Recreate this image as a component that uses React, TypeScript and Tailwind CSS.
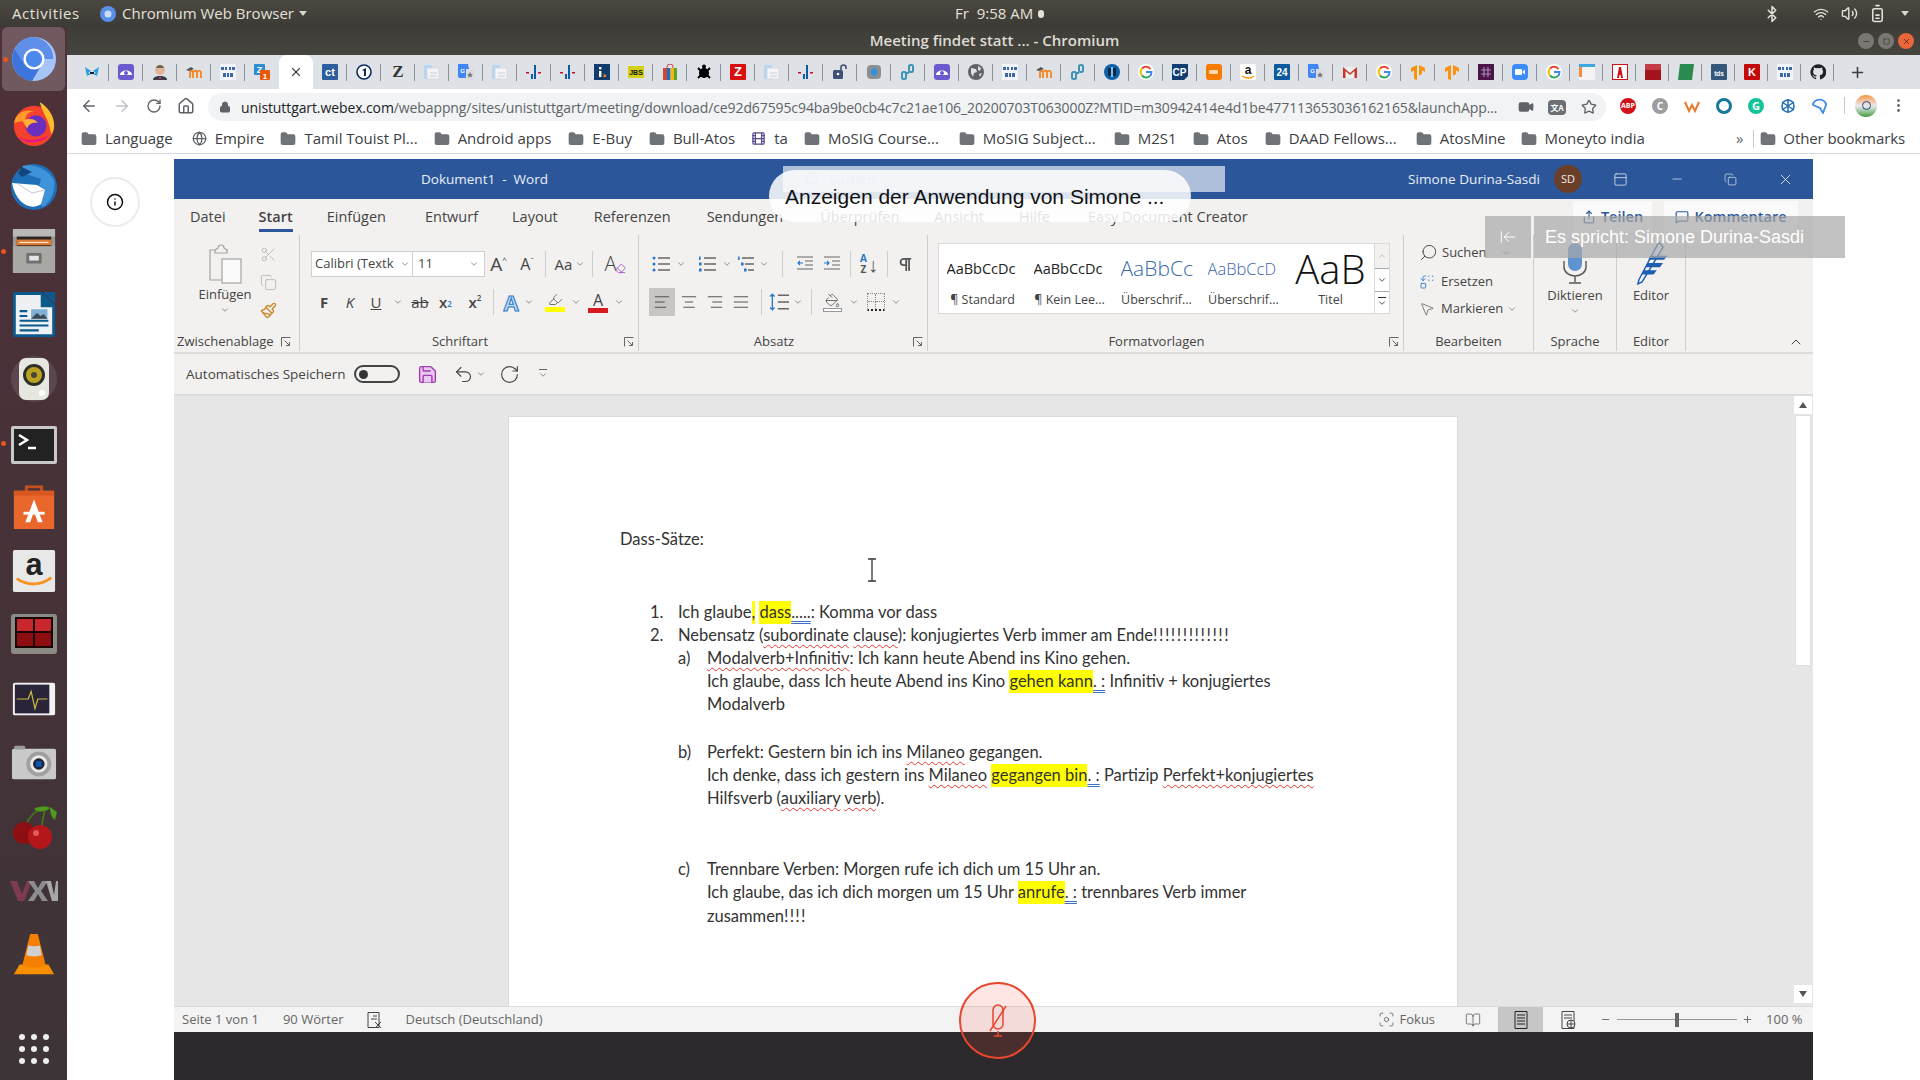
import type { ReactNode } from 'react'
import {
  ArrowLeft, ArrowRight, RotateCw, Home, Lock, Video, Star, MoreVertical, Folder, Globe, Film, Plus, X, Minus, Info,
  Scissors, Copy, Paintbrush, ChevronDown, ChevronUp, AlignLeft, AlignCenter, AlignRight, AlignJustify, Pilcrow,
  Search, MousePointer2, Share, MessageSquare, Undo2, RotateCw as Redo, Save, Bluetooth, Wifi, Volume2, BatteryMedium,
  ArrowLeftToLine, Eraser, Replace, Square, PanelTop, BookOpen, Focus, Highlighter, PaintBucket,
} from 'lucide-react'

function Favicon({ kind }: { kind: string }) {
  const box = (bg: string, label: string, fg = '#fff', size = 8) => (
    <svg viewBox="0 0 16 16" className="w-4 h-4">
      <rect width="16" height="16" rx="1" fill={bg} />
      <text x="8" y="11.5" textAnchor="middle" fontSize={size} fontWeight="700" fill={fg} fontFamily="Liberation Sans">{label}</text>
    </svg>
  )
  switch (kind) {
    case 'fly':
      return <svg viewBox="0 0 16 16" className="w-4 h-4"><path d="M1 3l6 4-3 2 3 1-4 2zM15 3L9 7l3 2-3 1 4 2z" fill="#2d9fd8" /><path d="M6 8h4v2H6z" fill="#123" /></svg>
    case 'cloud':
      return <svg viewBox="0 0 16 16" className="w-4 h-4"><rect width="16" height="16" rx="3" fill="#6a5acd" /><path d="M2 11c0-6 12-6 12 0z" fill="#fff" /><circle cx="8" cy="9" r="2" fill="#6a5acd" /></svg>
    case 'jenkins':
      return <svg viewBox="0 0 16 16" className="w-4 h-4"><path d="M1 16c0-3 3-4 7-4s7 1 7 4z" fill="#39394a" /><circle cx="8" cy="6" r="5" fill="#e0b29a" /><path d="M4 4c1-4 7-4 8 0z" fill="#77604f" /><path d="M7 13h2v2H7z" fill="#c33" /></svg>
    case 'moodle':
      return <svg viewBox="0 0 16 16" className="w-4 h-4"><path d="M4 14V8c2-2 3-1 3 1v5M7 14V8c2-2 4-2 4 1v5M11 14V9c0-3 4-3 4 0v5" stroke="#f98012" strokeWidth="1.7" fill="none" /><path d="M0 6l5-3 3 2-5 2z" fill="#555" /></svg>
    case 'tamil':
      return <svg viewBox="0 0 16 16" className="w-4 h-4"><rect width="16" height="16" fill="#f1f4fa" /><path d="M1 3h3v3H1zM5 3h2v3H5zM9 3h2v3H9zM12 3h3v3h-3zM3 9h3v4H3zM7 9h2v4H7zM10 9h3v4h-3z" fill="#3e67a8" /></svg>
    case 'z1':
      return <svg viewBox="0 0 16 16" className="w-4 h-4"><rect width="11" height="11" rx="1" fill="#2d8ccd" /><text x="5.5" y="9" textAnchor="middle" fontSize="9" fontWeight="700" fill="#fff" fontFamily="Liberation Sans">Z</text><rect x="6" y="6" width="10" height="10" rx="1" fill="#e8590c" /><text x="11" y="14.5" textAnchor="middle" fontSize="8" fontWeight="700" fill="#fff" fontFamily="Liberation Sans">1</text></svg>
    case 'ct':
      return box('#2d5f9e', 'ct', '#fff', 11)
    case 'ard':
      return <svg viewBox="0 0 16 16" className="w-4 h-4"><circle cx="8" cy="8" r="7" fill="#fff" stroke="#0c2a5e" strokeWidth="1.6" /><path d="M6 6l4-2v8H8V7z" fill="#0c2a5e" /></svg>
    case 'zeit':
      return <span className="font-['Liberation_Serif',serif] font-bold text-[17px] leading-4 text-[#333]">Z</span>
    case 'doc':
      return <svg viewBox="0 0 16 16" className="w-4 h-4"><rect x="0" y="1" width="8" height="14" fill="#b9d6ee" /><rect x="3" y="4" width="12" height="11" fill="#f3f4f6" stroke="#c9ced6" strokeWidth=".6" /><path d="M6 9h7M6 12h7" stroke="#c9ced6" /></svg>
    case 'tr':
      return <svg viewBox="0 0 16 16" className="w-4 h-4"><path d="M0 0h10l3 14H2a2 2 0 01-2-2z" fill="#4285f4" /><path d="M8 5h8v11H8z" fill="#dadce0" /><text x="4.5" y="8.5" textAnchor="middle" fontSize="6" fontWeight="700" fill="#fff" fontFamily="Liberation Sans">G</text><path d="M12 8l1 2 2 .4-1.5 1.2.5 2-2-1-2 1 .5-2L9 10.4l2-.4z" fill="#777" /></svg>
    case 'bars':
      return <svg viewBox="0 0 16 16" className="w-4 h-4"><path d="M5 10h2v5H5zM8 1h2v14H8z" fill="#0d5aa7" /><path d="M0 8h3v1.5H0zM12 8h3v1.5h-3z" fill="#c2112e" /></svg>
    case 'info':
      return <svg viewBox="0 0 16 16" className="w-4 h-4"><rect width="16" height="16" fill="#123c6b" /><rect x="5" y="3" width="2.4" height="2.4" fill="#fff" /><rect x="5" y="7" width="2.4" height="6" fill="#fff" /><rect x="9.5" y="10.5" width="2.6" height="2.6" fill="#f47b20" /></svg>
    case 'jbs':
      return <svg viewBox="0 0 16 16" className="w-4 h-4"><rect y="2" width="16" height="12" fill="#d4cf17" /><text x="8" y="11" textAnchor="middle" fontSize="7" fontWeight="700" fill="#111" fontFamily="Liberation Sans">JBS</text></svg>
    case 'bag':
      return <svg viewBox="0 0 16 16" className="w-4 h-4"><path d="M5 5V3a3 3 0 016 0v2" fill="none" stroke="#c44" /><path d="M1 4h4v12H1z" fill="#d5452f" /><path d="M5 4h3.5v12H5z" fill="#1a6fd1" /><path d="M8.5 4H12v12H8.5z" fill="#f2b70c" /><path d="M12 4h3v12h-3z" fill="#5aa532" /></svg>
    case 'turtle':
      return <svg viewBox="0 0 16 16" className="w-4 h-4"><circle cx="8" cy="9" r="5" fill="#000" /><circle cx="8" cy="2.5" r="2" fill="#000" /><path d="M2 4l3 3M14 4l-3 3M2 14l3-3M14 14l-3-3" stroke="#000" strokeWidth="2" /></svg>
    case 'zred':
      return box('#d8110f', 'Z', '#fff', 13)
    case 'lock':
      return <svg viewBox="0 0 16 16" className="w-4 h-4"><path d="M9 6V3.5a2.5 2.5 0 015 0V5" fill="none" stroke="#3f4f75" strokeWidth="1.6" /><rect x="1" y="6" width="10" height="9" rx="1.5" fill="#3f4f75" /><circle cx="6" cy="10" r="1.3" fill="#fff" /></svg>
    case 'hex':
      return <svg viewBox="0 0 16 16" className="w-4 h-4"><rect x="1" y="1" width="14" height="14" rx="4" fill="#8c8f92" /><path d="M8 3l4 5-4 5-4-5z" fill="#2f8fd8" /></svg>
    case 'chain':
      return <svg viewBox="0 0 16 16" className="w-4 h-4" fill="none" stroke="#3f93b5" strokeWidth="2"><rect x="2" y="8" width="4" height="7" rx="1.5" /><rect x="9" y="1" width="4" height="7" rx="1.5" /><path d="M6 9h3" /></svg>
    case 'globe':
      return <svg viewBox="0 0 16 16" className="w-4 h-4"><circle cx="8" cy="8" r="8" fill="#5f6368" /><path d="M3 4l5 1 1 3-3 1-1 4-2-4zM10 2l3 2-1 3-2-1zM11 10l3-1-2 4z" fill="#dee1e6" /></svg>
    case 'blue':
      return <svg viewBox="0 0 16 16" className="w-4 h-4"><circle cx="8" cy="8" r="8" fill="#0f5fa8" /><rect x="4" y="4" width="8" height="8" fill="#0b2a4a" /><rect x="7" y="3" width="2" height="10" fill="#7ec3ef" /></svg>
    case 'g':
      return <svg viewBox="0 0 16 16" className="w-4 h-4"><circle cx="8" cy="8" r="8" fill="#fff" /><path d="M12.5 5A5.500 5.500 0 004 4.500" fill="none" stroke="#ea4335" strokeWidth="2" /><path d="M4 4.500a5.500 5.500 0 000 7" fill="none" stroke="#fbbc05" strokeWidth="2" /><path d="M4 11.500a5.500 5.500 0 008 .5" fill="none" stroke="#34a853" strokeWidth="2" /><path d="M12 12c1-1 1.500-2 1.500-4H8" fill="none" stroke="#4285f4" strokeWidth="2" /></svg>
    case 'cp':
      return <svg viewBox="0 0 16 16" className="w-4 h-4"><path d="M0 0h16v12l-4 4H0z" fill="#123f73" /><text x="7.5" y="12" textAnchor="middle" fontSize="10" fontWeight="700" fill="#fff" fontFamily="Liberation Sans">CP</text></svg>
    case 'oran':
      return <svg viewBox="0 0 16 16" className="w-4 h-4"><rect width="16" height="16" rx="3" fill="#f47a00" /><rect x="3" y="6" width="9" height="4" rx="1" fill="#ffd9ad" /></svg>
    case 'amz':
      return <svg viewBox="0 0 16 16" className="w-4 h-4"><rect width="16" height="16" rx="2" fill="#fff" /><text x="8" y="10" textAnchor="middle" fontSize="12" fontWeight="700" fill="#111" fontFamily="Liberation Sans">a</text><path d="M2 12c4 3 9 3 12 0" fill="none" stroke="#f90" strokeWidth="1.3" /></svg>
    case '24':
      return box('#0b5a9e', '24', '#fff', 10)
    case 'gm':
      return <svg viewBox="0 0 16 16" className="w-4 h-4"><path d="M1 3h14v11H1z" fill="#eee" /><path d="M1 14V3l7 6 7-6v11h-2.500V7L8 11 3.500 7v7z" fill="#c5382c" /></svg>
    case 'tf':
      return <svg viewBox="0 0 16 16" className="w-4 h-4"><path d="M7 1L1 4v4l3-1.500V15l3 1zM9 1l6 3v4l-3-1.500V10l-3 1.500z" fill="#f9930f" /></svg>
    case 'slack':
      return <svg viewBox="0 0 16 16" className="w-4 h-4"><rect width="16" height="16" fill="#4a154b" /><path d="M6 3v10M10 3v10M3 6h10M3 10h10" stroke="#a88ba9" strokeWidth="1.2" /></svg>
    case 'zoom':
      return <svg viewBox="0 0 16 16" className="w-4 h-4"><rect width="16" height="16" rx="4" fill="#3b8cf7" /><rect x="3" y="5" width="7" height="6" rx="1" fill="#fff" /><path d="M10.500 7.500L13 5.500v5l-2.500-2z" fill="#fff" /></svg>
    case 'win':
      return <svg viewBox="0 0 16 16" className="w-4 h-4"><rect width="16" height="16" fill="#f3f3f3" /><rect width="16" height="3" fill="#3fa7e0" /><rect y="3" width="3" height="10" fill="#f58c3b" /></svg>
    case 'abox':
      return <svg viewBox="0 0 16 16" className="w-4 h-4"><rect x=".5" y=".5" width="15" height="15" fill="#fff" stroke="#d21219" /><path d="M5 14L7 3h2l2 11H9l-.4-3H7.400L7 14z" fill="#d21219" /></svg>
    case 'red':
      return <svg viewBox="0 0 16 16" className="w-4 h-4"><rect width="16" height="16" fill="#a3141f" /><path d="M0 0h16v6H0z" fill="#c43c4a" /></svg>
    case 'green':
      return <svg viewBox="0 0 16 16" className="w-4 h-4"><path d="M2 0h14l-2 16H0z" fill="#2a8a4f" /></svg>
    case 'tds':
      return box('#34587c', 'tds', '#fff', 6.5)
    case 'k':
      return box('#c4090a', 'K', '#fff', 11)
    case 'gh':
      return <svg viewBox="0 0 24 24" className="w-4 h-4"><path fill="#1f2328" d="M12 .5a11.500 11.500 0 00-3.600 22.400c.6.100.8-.2.800-.6v-2c-3.200.7-3.900-1.500-3.900-1.500-.5-1.300-1.300-1.700-1.300-1.700-1-.7.100-.7.100-.7 1.200.1 1.800 1.200 1.800 1.200 1 1.800 2.700 1.300 3.400 1 .1-.8.400-1.300.7-1.600-2.600-.3-5.300-1.300-5.300-5.700 0-1.300.5-2.300 1.200-3.100-.1-.3-.5-1.500.1-3.100 0 0 1-.3 3.200 1.200a11 11 0 015.800 0c2.200-1.500 3.200-1.200 3.200-1.200.6 1.600.2 2.800.1 3.100.7.800 1.200 1.800 1.200 3.100 0 4.400-2.700 5.400-5.300 5.700.4.400.8 1.100.8 2.200v3.300c0 .3.200.7.800.6A11.500 11.500 0 0012 .5z" /></svg>
    default:
      return null
  }
}

const tabs = [
  'fly', 'cloud', 'jenkins', 'moodle', 'tamil', 'z1', 'ACTIVE', 'ct', 'ard', 'zeit', 'doc', 'tr', 'doc', 'bars', 'bars', 'info', 'jbs', 'bag',
  'turtle', 'zred', 'doc', 'bars', 'lock', 'hex', 'chain', 'cloud', 'globe', 'tamil', 'moodle', 'chain', 'blue', 'g', 'cp', 'oran', 'amz', '24',
  'tr', 'gm', 'g', 'tf', 'tf', 'slack', 'zoom', 'g', 'win', 'abox', 'red', 'green', 'tds', 'k', 'tamil', 'gh',
]

const bookmarks = [
  { t: 'Language', i: 'f', w: 'ml-[14px]' }, { t: 'Empire', i: 'g', w: 'ml-[19px]' }, { t: 'Tamil Touist Pl...', i: 'f', w: 'ml-[16px]' },
  { t: 'Android apps', i: 'f', w: 'ml-[16px]' }, { t: 'E-Buy', i: 'f', w: 'ml-[17px]' }, { t: 'Bull-Atos', i: 'f', w: 'ml-[17px]' },
  { t: 'ta', i: 'm', w: 'ml-[16px]' }, { t: 'MoSIG Course...', i: 'f', w: 'ml-[16px]' }, { t: 'MoSIG Subject...', i: 'f', w: 'ml-[20px]' },
  { t: 'M2S1', i: 'f', w: 'ml-[18px]' }, { t: 'Atos', i: 'f', w: 'ml-[16px]' }, { t: 'DAAD Fellows...', i: 'f', w: 'ml-[17px]' },
  { t: 'AtosMine', i: 'f', w: 'ml-[19px]' }, { t: 'Moneyto india', i: 'f', w: 'ml-[15px]' },
]

function DockIcon({ kind }: { kind: string }) {
  switch (kind) {
    case 'chromium':
      return <svg viewBox="0 0 48 48" className="w-[46px] h-[46px]"><circle cx="24" cy="24" r="23" fill="#a5c4f7" /><path d="M24 1a23 23 0 00-20 12l10 17 10-6h20A23 23 0 0024 1z" fill="#5f8fe8" /><path d="M4 13a23 23 0 0018 34l10-17-18 0z" fill="#3d75dd" /><circle cx="24" cy="24" r="11" fill="#fff" /><circle cx="24" cy="24" r="8.5" fill="#4d88ec" /></svg>
    case 'firefox':
      return <svg viewBox="0 0 48 48" className="w-[46px] h-[46px]"><circle cx="24" cy="27" r="21" fill="#f5402c" /><path d="M30 2c8 5 15 14 15 24 0 4-1 7-3 10C40 20 32 12 30 2z" fill="#ffbd2e" /><path d="M3 24C6 12 16 9 24 12c-6 0-9 4-9 9z" fill="#ff9a2b" /><circle cx="26" cy="27" r="11" fill="#6b2fbf" /><path d="M12 22c6-4 14-2 16 2-5-1-10 1-11 6z" fill="#ffb03a" /><path d="M6 38c8 8 26 9 34-2-8 6-24 8-34 2z" fill="#e31587" /></svg>
    case 'bird':
      return <svg viewBox="0 0 48 48" className="w-12 h-12"><circle cx="24" cy="24" r="23" fill="#1f6fb8" /><path d="M12 3c10-3 26 2 32 14 2 10-3 22-11 27l-8-8 6-20-15-5z" fill="#3f93d8" /><path d="M2 20l25 2 8 5-4 14c-10 7-25 0-29-21z" fill="#fff" /><path d="M8 21l14 9 13-3" stroke="#c4cbd6" fill="none" /><path d="M12 4l10 5-10 5-4-4z" fill="#12467f" /></svg>
    case 'files':
      return <svg viewBox="0 0 48 48" className="w-[46px] h-[46px]"><rect x="2" y="1" width="44" height="46" rx="2" fill="#9a9a96" /><rect x="2" y="1" width="44" height="8" fill="#b8b8b4" /><rect x="6" y="9" width="36" height="10" fill="#2b2420" /><rect x="6" y="12" width="36" height="6" fill="#e07a30" /><path d="M9 15h30" stroke="#fff" /><path d="M2 19h44v28H2z" fill="#a8a8a5" /><rect x="16" y="26" width="16" height="11" rx="1" fill="#707070" /><rect x="19" y="29" width="10" height="5" fill="#e5e5e5" /></svg>
    case 'writer':
      return <svg viewBox="0 0 48 48" className="w-[46px] h-[46px]"><path d="M2 0h30l14 14v30a3 3 0 01-3 3H5a3 3 0 01-3-3z" fill="#0a5a8e" /><path d="M5 3h26v13h12v28H5z" fill="#eef1f3" /><path d="M33 0h13v13z" fill="#0a5a8e" /><path d="M9 20h8M9 25h8M9 30h30M9 35h30M9 40h20" stroke="#0a5a8e" strokeWidth="2.2" /><rect x="21" y="18" width="17" height="10" fill="#7fb0d6" /><path d="M21 28l6-6 4 3 3-2 4 5z" fill="#3b4b55" /></svg>
    case 'speaker':
      return <svg viewBox="0 0 48 48" className="w-12 h-12"><circle cx="24" cy="24" r="23" fill="#5c4650" /><rect x="9" y="3" width="30" height="42" rx="7" fill="#e7e7e2" /><circle cx="24" cy="20" r="11" fill="#2f2f2a" /><circle cx="24" cy="20" r="8" fill="#b9a320" /><circle cx="24" cy="20" r="3" fill="#4b4632" /><circle cx="32" cy="38" r="3" fill="#fff" /></svg>
    case 'term':
      return <svg viewBox="0 -2 48 48" className="w-12 h-12"><rect x="1" y="5" width="46" height="38" rx="2" fill="#c8c8c8" /><rect x="4" y="8" width="40" height="32" fill="#222" /><path d="M9 14l8 5-8 5" fill="none" stroke="#fff" strokeWidth="2.5" /><path d="M18 27h8" stroke="#fff" strokeWidth="2.5" /></svg>
    case 'store':
      return <svg viewBox="0 0 48 48" className="w-[46px] h-[46px]"><path d="M16 8V3h16v5" fill="none" stroke="#c4521f" strokeWidth="3" /><path d="M3 7h42v40H3z" fill="#e9662c" /><path d="M3 7h42v5H3z" fill="#d9581f" /><path d="M24 16l9 24h-5l-4-11-4 11h-5z" fill="#fff" /><path d="M13 29h22v3H13z" fill="#fff" /></svg>
    case 'amazon':
      return <svg viewBox="0 0 48 48" className="w-[46px] h-[46px]"><rect x="2" y="2" width="44" height="44" rx="2" fill="#e8e8e8" /><text x="24" y="28" textAnchor="middle" fontSize="32" fontWeight="700" fill="#222" fontFamily="Liberation Sans">a</text><path d="M6 32c12 8 26 7 36-1" fill="none" stroke="#f7941d" strokeWidth="3" /></svg>
    case 'multi':
      return <svg viewBox="0 0 48 48" className="w-12 h-12"><rect x="1" y="3" width="46" height="40" rx="3" fill="#8b8b86" /><rect x="5" y="6" width="38" height="31" fill="#1a0505" /><path d="M7 8h16v12H7zM25 8h16v12H25z" fill="#c8282d" /><path d="M7 22h16v13H7zM25 22h16v13H25z" fill="#8c0e10" /></svg>
    case 'pulse':
      return <svg viewBox="0 -3 48 48" className="w-[46px] h-[46px]"><rect x="2" y="4" width="44" height="34" rx="2" fill="#f3f3f3" /><rect x="4" y="6" width="36" height="30" fill="#2a2438" /><path d="M6 21h12l3-8 4 18 3-10h10" fill="none" stroke="#c9b946" strokeWidth="1.3" /></svg>
    case 'camera':
      return <svg viewBox="0 -3 48 48" className="w-[46px] h-[46px]"><rect x="1" y="6" width="46" height="32" rx="2" fill="#c9c9c9" /><rect x="3" y="3" width="12" height="4" rx="2" fill="#9a9a9a" /><circle cx="29" cy="22" r="13" fill="#a0a0a0" /><circle cx="29" cy="22" r="9" fill="#e8e8e8" /><circle cx="29" cy="22" r="6" fill="#223" /><rect x="26" y="19" width="6" height="6" fill="#0a58b0" /></svg>
    case 'cherry':
      return <svg viewBox="0 0 48 48" className="w-12 h-12"><path d="M16 22C20 12 28 6 36 4M32 24c0-8 2-14 4-20" fill="none" stroke="#3c7a16" strokeWidth="1.8" /><path d="M24 6c6-3 12-3 16-1-4 4-12 5-16 1zM40 4l7 5-2 8c-4-3-5-8-5-13z" fill="#4d9a1f" /><circle cx="14" cy="30" r="11" fill="#8e0f12" /><circle cx="30" cy="34" r="12" fill="#b5161a" /><circle cx="26" cy="30" r="3" fill="#e25a5a" /></svg>
    case 'vm':
      return <svg viewBox="0 0 48 24" className="w-12 h-6"><path d="M0 2h7l5 13 5-13h5l-8 20H8z" fill="#7d3a52" /><path d="M18 2h6l4 7 4-7h6L31 12l7 10h-6l-4-7-4 7h-6l7-10z" fill="#8b8d90" /><path d="M36 2h5l3 14 2-14h2v20h-6z" fill="#a6a8aa" /></svg>
    case 'vlc':
      return <svg viewBox="0 0 48 48" className="w-[46px] h-[46px]"><path d="M3 44l6-10h30l6 10z" fill="#f69000" /><path d="M20 2h8l8 32c-4 4-20 4-24 0z" fill="#f57f00" /><path d="M18 14c4 1 8 1 12 0l2 10c-5 2-11 2-16 0z" fill="#d0d0d0" /></svg>
    default:
      return (
        <div className="grid grid-cols-3 gap-x-[6px] gap-y-[6px]">
          {Array.from({ length: 9 }).map((_, i) => <span key={i} className="w-[6px] h-[6px] rounded-full bg-[#eeeeee]" />)}
        </div>
      )
  }
}

const dockItems = ['chromium', 'firefox', 'bird', 'files', 'writer', 'speaker', 'term', 'store', 'amazon', 'multi', 'pulse', 'camera', 'cherry', 'vm', 'vlc']

function Dock() {
  return (
    <div className="w-[67px] h-full flex flex-col bg-gradient-to-b from-[#4e3038] to-[#3d3437]">
      {dockItems.map((k, i) => (
        <div key={k} className={`relative h-[64px] flex items-center justify-center shrink-0 ${i === 0 ? 'bg-white/20 rounded-md mx-[2px]' : ''}`}>
          {(k === 'chromium' || k === 'files' || k === 'term') && <span className="absolute left-[1px] top-[30px] w-[5px] h-[5px] rounded-full bg-[#e95420]" />}
          <DockIcon kind={k} />
        </div>
      ))}
      <div className="mt-auto h-[62px] flex items-center justify-center"><DockIcon kind="grid" /></div>
    </div>
  )
}

function TopBar() {
  return (
    <div className="h-[27px] shrink-0 flex items-center bg-gradient-to-b from-[#4a4840] to-[#3c3a35] text-[#e4e1da] text-[15px] font-medium relative whitespace-nowrap">
      <span className="ml-[12px] w-[88px] tracking-[0.6px]">Activities</span>
      <svg viewBox="0 0 16 16" className="w-4 h-4"><circle cx="8" cy="8" r="8" fill="#5a8fe8" /><circle cx="8" cy="8" r="3.5" fill="#c9dcfb" /></svg>
      <span className="ml-[6px]">Chromium Web Browser</span>
      <span className="ml-[5px] w-0 h-0 border-x-[4px] border-x-transparent border-t-[5px] border-t-[#d8d5cd]" />
      <span className="ml-[648px]">Fr&nbsp;&nbsp;9:58 AM</span>
      <span className="ml-[5px] w-[6px] h-[8px] rounded-full bg-[#e4e1da]" />
      <div className="ml-auto flex items-center">
        <Bluetooth size={18} />
        <Wifi size={16} className="ml-[32px]" />
        <Volume2 size={17} className="ml-[12px]" />
        <BatteryMedium size={19} className="ml-[10px] -rotate-90" />
        <span className="ml-[14px] mr-[11px] w-0 h-0 border-x-[4px] border-x-transparent border-t-[5px] border-t-[#d8d5cd]" />
      </div>
    </div>
  )
}

function ChromeFrame() {
  return (
    <>
      <div className="h-[28px] shrink-0 flex items-center bg-gradient-to-b from-[#3f3d38] to-[#46443f] text-[#dfdcd4] text-[15px] font-semibold">
        <div className="flex-1 text-center pl-[64px] -mt-[2px]">Meeting findet statt ... - Chromium</div>
        <div className="flex items-center gap-[4px] mr-[6px]">
          <span className="w-4 h-4 rounded-full bg-[#7a7872] flex items-center justify-center"><Minus size={9} className="text-[#333]" /></span>
          <span className="w-4 h-4 rounded-full bg-[#7a7872] flex items-center justify-center"><Square size={7} className="text-[#333]" /></span>
          <span className="w-4 h-4 rounded-full bg-[#e9673a] flex items-center justify-center"><X size={9} className="text-[#4a2010]" /></span>
        </div>
      </div>
      <div className="h-[34px] shrink-0 bg-[#dee1e6] flex items-center pl-[8px]">
        {tabs.map((k, i) =>
          k === 'ACTIVE' ? (
            <div key={i} className="w-[34px] h-full bg-white rounded-t-lg flex items-center justify-center"><X size={14} className="text-[#444]" /></div>
          ) : (
            <div key={i} className={`relative h-full flex items-center justify-center ${i >= 43 ? 'w-[33px]' : 'w-[34px]'}`}>
              <Favicon kind={k} />
              {tabs[i + 1] !== 'ACTIVE' && <span className="absolute right-0 top-[9px] w-px h-[17px] bg-[#8f9298]" />}
            </div>
          ),
        )}
        <Plus size={17} strokeWidth={2.2} className="ml-[15px] text-[#3c4043]" />
      </div>
      <div className="h-[33px] shrink-0 bg-white flex items-center">
        <div className="w-[141px] flex items-center pl-[13px] gap-[15px] text-[#5f6368]">
          <ArrowLeft size={18} />
          <ArrowRight size={18} className="text-[#bdc1c6]" />
          <RotateCw size={16} />
          <Home size={18} />
        </div>
        <div className="w-[1398px] h-[28px] mt-[3px] rounded-full bg-[#f1f3f4] flex items-center pl-[11px] text-[14px] tracking-[-0.1px] whitespace-nowrap">
          <Lock size={12} fill="#5f6368" className="text-[#5f6368]" />
          <span className="ml-[10px] text-[#202124]">unistuttgart.webex.com</span>
          <span className="text-[#5f6368] w-[1123px] overflow-hidden">/webappng/sites/unistuttgart/meeting/download/ce92d67595c94ba9be0cb4c7c21ae106_20200703T063000Z?MTID=m30942414e4d1be477113653036162165&amp;launchApp...</span>
          <Video size={16} fill="#5f6368" className="ml-auto text-[#5f6368]" />
          <span className="ml-[14px] w-[18px] h-[15px] rounded-sm bg-[#6b6f73] text-white text-[8px] font-bold text-center leading-[15px] font-['Noto_Sans_CJK_SC',sans-serif]">文A</span>
          <Star size={16} className="ml-[15px] mr-[9px] text-[#5f6368]" />
        </div>
        <div className="flex-1 flex items-center pl-[14px] gap-[16px]">
          <span className="w-4 h-4 bg-[#d21219] rounded-full text-white text-[7px] font-bold text-center leading-4">ABP</span>
          <span className="w-4 h-4 bg-[#9e9e9e] rounded-full text-white text-[10px] font-bold text-center leading-4">C</span>
          <svg viewBox="0 0 16 16" className="w-4 h-4"><path d="M1 4l4 9 3-6 3 6 4-9" fill="none" stroke="#e8792c" strokeWidth="2" /></svg>
          <span className="w-4 h-4 rounded-full border-[3px] border-[#177a9c] bg-white" />
          <span className="w-4 h-4 bg-[#15c39a] rounded-full text-white text-[11px] font-bold text-center leading-4">G</span>
          <svg viewBox="0 0 16 16" className="w-4 h-4" fill="none" stroke="#1f6fb8" strokeWidth="1.5"><path d="M8 1v14M2 4l12 8M14 4L2 12" /><circle cx="8" cy="8" r="6" /></svg>
          <svg viewBox="0 0 16 16" className="w-4 h-4" fill="none" stroke="#3c8ce7" strokeWidth="1.8"><path d="M1 7a6 5 0 0113 0l-3 8-3-5z" /></svg>
          <span className="w-px h-[17px] bg-[#c8cacd]" />
          <span className="-ml-[6px] w-[22px] h-[22px] rounded-full bg-gradient-to-b from-[#f4953a] via-[#e8eaf1] to-[#3f9a3a] flex items-center justify-center"><span className="w-[9px] h-[9px] rounded-full border border-[#2d4a80]" /></span>
          <MoreVertical size={17} className="ml-[-3px] text-[#5f6368]" />
        </div>
      </div>
      <div className="h-[32px] shrink-0 bg-white border-b border-[#d9dadc] pt-[2px] flex items-center text-[15px] text-[#3c4043] whitespace-nowrap">
        {bookmarks.map((b) => (
          <div key={b.t} className={`flex items-center gap-[8px] ${b.w}`}>
            {b.i === 'f' && <Folder size={16} fill="#6f7377" className="text-[#6f7377]" />}
            {b.i === 'g' && <Globe size={15} className="text-[#5f6368]" />}
            {b.i === 'm' && <Film size={15} className="text-[#5b4a8a]" />}
            <span>{b.t}</span>
          </div>
        ))}
        <span className="ml-auto text-[#5f6368]">»</span>
        <span className="ml-[10px] w-px h-[18px] bg-[#c8cacd]" />
        <div className="ml-[6px] mr-[15px] flex items-center gap-[7px] tracking-[-0.1px]">
          <Folder size={16} fill="#6f7377" className="text-[#6f7377]" />
          <span>Other bookmarks</span>
        </div>
      </div>
    </>
  )
}

const Chev = ({ className = '' }: { className?: string }) => <ChevronDown size={10} strokeWidth={1.5} className={`text-[#555] shrink-0 ${className}`} />
const VSep = ({ className = '' }: { className?: string }) => <span className={`w-px h-[26px] bg-[#d0cecd] shrink-0 ${className}`} />

function Cell({ className = '', children }: { className?: string; children: ReactNode }) {
  return <div className={`h-full flex items-center justify-center shrink-0 ${className}`}>{children}</div>
}

const Launcher = ({ className = '' }: { className?: string }) => (
  <svg viewBox="0 0 10 10" className={`w-[10px] h-[10px] ${className}`} fill="none" stroke="#666" strokeWidth="1"><path d="M.5 9.500v-9h9M3.500 3.500l5 5M8.500 5v3.500H5" /></svg>
)

function GroupLabel({ label }: { label: string }) {
  return (
    <div className="mt-auto h-[19px] grid grid-cols-[1fr_auto_1fr] items-center text-[13px] text-[#444] pr-[18px]">
      <span />
      <span>{label}</span>
      <span className="flex justify-end"><Launcher className="-mr-[14px]" /></span>
    </div>
  )
}

function ListIcon({ kind }: { kind: 'bullet' | 'num' | 'multi' | 'out' | 'in' }) {
  const dot = '#2a78c8'
  if (kind === 'out' || kind === 'in') {
    return (
      <svg viewBox="0 0 18 18" className="w-[20px] h-[20px]">
        <path d="M1 2h16M9 6h8M9 10h8M1 14h16" stroke="#666" strokeWidth="1.2" />
        <path d={kind === 'out' ? 'M7 8H2M4 6L2 8l2 2' : 'M1 8h5M4 6l2 2-2 2'} stroke="#2a78c8" fill="none" strokeWidth="1.2" />
      </svg>
    )
  }
  return (
    <svg viewBox="0 0 18 18" className="w-[20px] h-[20px]">
      <path d={kind === 'multi' ? 'M5 3h12M8 9h9M11 15h6' : 'M6 3h12M6 9h12M6 15h12'} stroke="#666" strokeWidth="1.3" />
      {kind === 'bullet' ? (
        <><circle cx="2" cy="3" r="1.5" fill={dot} /><circle cx="2" cy="9" r="1.5" fill={dot} /><circle cx="2" cy="15" r="1.5" fill={dot} /></>
      ) : (
        <><rect x="1" y="1.5" width="1.6" height="3.5" fill={dot} /><rect x={kind === 'multi' ? 4 : 1} y="7.5" width="2.6" height="3" fill={dot} /><rect x={kind === 'multi' ? 7 : 1} y="13.5" width="2.6" height="3" fill={dot} /></>
      )}
    </svg>
  )
}

const galleryStyles = [
  { p: 'AaBbCcDc', c: 'text-[14.5px] text-[#222]', l: '¶ Standard' },
  { p: 'AaBbCcDc', c: 'text-[14.5px] text-[#222]', l: '¶ Kein Lee...' },
  { p: 'AaBbCc(', c: 'text-[21px] text-[#3a68a8] font-light', l: 'Überschrif...' },
  { p: 'AaBbCcD', c: 'text-[16.5px] text-[#3a68a8] font-light', l: 'Überschrif...' },
  { p: 'AaB', c: 'text-[40px] leading-[40px] text-[#111] font-light', l: 'Titel' },
]

function Ribbon() {
  return (
    <div className="h-[117px] shrink-0 bg-[#f3f1f0] flex text-[13px] text-[#444] pb-[1px]">
      {/* Zwischenablage */}
      <div className="w-[126px] h-full flex flex-col border-r border-[#d0cecd]">
        <div className="flex pl-[24px] pt-[9px]">
          <div className="w-[54px] flex flex-col items-center">
            <svg viewBox="0 0 34 40" className="w-[34px] h-[40px]" fill="none" stroke="#a5a3a1" strokeWidth="1.2"><path d="M20 6H2v30h12" /><path d="M7 6l3-2c0-4 6-4 6 0l3 2v3H7z" fill="#f3f1f0" /><rect x="14" y="15" width="19" height="24" fill="#fbfafa" /></svg>
            <span className="mt-[2px] leading-4">Einfügen</span>
            <Chev className="mt-[3px]" />
          </div>
          <div className="ml-[8px] mt-[2px] flex flex-col items-center gap-[11px]">
            <Scissors size={17} strokeWidth={1} className="text-[#a8a6a4]" />
            <Copy size={17} strokeWidth={1} className="text-[#a8a6a4]" />
            <Paintbrush size={17} className="text-[#c98b2e]" />
          </div>
        </div>
        <div className="mt-auto h-[19px] flex items-center pl-[3px] text-[#444] whitespace-nowrap">Zwischenablage<Launcher className="ml-[7px]" /></div>
      </div>
      {/* Schriftart */}
      <div className="w-[339px] h-full flex flex-col border-r border-[#d0cecd] pt-[16px]">
        <div className="h-[26px] flex items-center pl-[11px]">
          <div className="w-[102px] h-full bg-white border border-[#d4d2d0] flex items-center justify-between pl-[3px] pr-[2px] overflow-hidden whitespace-nowrap text-[13px]"><span className="w-[84px] overflow-hidden">Calibri (Textk</span><Chev /></div>
          <div className="w-[72px] h-full bg-white border border-[#d4d2d0] border-l-0 flex items-center justify-between px-[5px] text-[13px]"><span>11</span><Chev /></div>
          <Cell className="w-[27px] text-[19px]">A<span className="text-[8px] -mt-2">^</span></Cell>
          <Cell className="w-[30px] text-[16px]">A<span className="text-[8px] -mt-2">ˇ</span></Cell>
          <VSep className="ml-[3px]" />
          <Cell className="w-[36px] ml-[6px] text-[15px]">Aa<Chev className="ml-[3px]" /></Cell>
          <VSep className="ml-[4px]" />
          <Cell className="w-[28px] ml-[8px] text-[20px] font-light">A<Eraser size={11} className="text-[#a155c9] -ml-[2px] mt-[9px]" /></Cell>
        </div>
        <div className="h-[28px] mt-[11px] flex items-center pl-[11px] text-[15px]">
          <Cell className="w-[26px] font-bold">F</Cell>
          <Cell className="w-[26px] italic">K</Cell>
          <Cell className="w-[26px] underline">U</Cell>
          <Cell className="w-[18px]"><Chev /></Cell>
          <Cell className="w-[26px] line-through">ab</Cell>
          <Cell className="w-[25px] font-semibold">x<sub className="text-[8px] text-[#2a78c8]">2</sub></Cell>
          <Cell className="w-[26px] ml-[4px] font-semibold">x<sup className="text-[8px]">2</sup></Cell>
          <VSep className="ml-[5px]" />
          <Cell className="w-[26px] ml-[4px] text-[22px] font-bold text-[#bcd7f2] [-webkit-text-stroke:1px_#2a78c8]">A</Cell>
          <Cell className="w-[10px]"><Chev /></Cell>
          <Cell className="w-[26px] ml-[8px] flex-col"><Highlighter size={15} strokeWidth={1.5} className="text-[#666]" /><span className="w-[20px] h-[5px] bg-[#ffff00]" /></Cell>
          <Cell className="w-[12px] ml-[2px]"><Chev /></Cell>
          <Cell className="w-[26px] ml-[3px] flex-col"><span className="text-[16px] leading-[16px]">A</span><span className="w-[20px] h-[5px] bg-[#d71920]" /></Cell>
          <Cell className="w-[12px] ml-[2px]"><Chev /></Cell>
        </div>
        <GroupLabel label="Schriftart" />
      </div>
      {/* Absatz */}
      <div className="w-[289px] h-full flex flex-col border-r border-[#d0cecd] pt-[16px]">
        <div className="h-[26px] flex items-center pl-[13px]">
          <Cell className="w-[18px]"><ListIcon kind="bullet" /></Cell>
          <Cell className="w-[17px] ml-[2px]"><Chev /></Cell>
          <Cell className="w-[18px] ml-[9px]"><ListIcon kind="num" /></Cell>
          <Cell className="w-[17px] ml-[2px]"><Chev /></Cell>
          <Cell className="w-[18px] ml-[2px]"><ListIcon kind="multi" /></Cell>
          <Cell className="w-[14px] ml-[2px]"><Chev /></Cell>
          <VSep className="ml-[11px]" />
          <Cell className="w-[18px] ml-[13px]"><ListIcon kind="out" /></Cell>
          <Cell className="w-[18px] ml-[9px]"><ListIcon kind="in" /></Cell>
          <VSep className="ml-[9px]" />
          <Cell className="w-[22px] ml-[7px] leading-[11px] text-[10px] font-bold text-[#2a78c8]"><span className="flex flex-col items-center"><span>A</span><span className="text-[#555]">Z</span></span><span className="text-[20px] text-[#555] font-normal ml-[1px]">↓</span></Cell>
          <VSep className="ml-[7px]" />
          <Cell className="w-[20px] ml-[7px]"><Pilcrow size={17} strokeWidth={2.5} className="text-[#555]" /></Cell>
        </div>
        <div className="h-[28px] mt-[11px] flex items-center pl-[10px]">
          <Cell className="w-[26px] bg-[#c8c6c4]"><AlignLeft size={18} strokeWidth={1.2} /></Cell>
          <Cell className="w-[26px] ml-[1px]"><AlignCenter size={18} strokeWidth={1.2} /></Cell>
          <Cell className="w-[26px]"><AlignRight size={18} strokeWidth={1.2} /></Cell>
          <Cell className="w-[26px]"><AlignJustify size={18} strokeWidth={1.2} /></Cell>
          <VSep className="ml-[7px]" />
          <Cell className="w-[24px] ml-[5px]">
            <svg viewBox="0 0 18 18" className="w-[20px] h-[20px]" fill="none"><path d="M8 3h10M8 9h10M8 15h10" stroke="#666" strokeWidth="1.3" /><path d="M3 2v14M1 4l2-2 2 2M1 14l2 2 2-2" stroke="#2a78c8" strokeWidth="1.2" /></svg>
          </Cell>
          <Cell className="w-[14px]"><Chev /></Cell>
          <VSep className="ml-[6px]" />
          <Cell className="w-[26px] ml-[7px] flex-col"><PaintBucket size={15} strokeWidth={1.3} className="text-[#555]" /><span className="w-[19px] h-[4px] bg-white border border-[#999]" /></Cell>
          <Cell className="w-[14px] ml-[2px]"><Chev /></Cell>
          <Cell className="w-[22px] ml-[4px]"><span className="w-[18px] h-[18px] border-x border-t border-dotted border-[#888] border-b-2 border-b-[#222] grid grid-cols-2 grid-rows-2"><span className="border-r border-b border-dotted border-[#888]" /><span className="border-b border-dotted border-[#888]" /><span className="border-r border-dotted border-[#888]" /><span /></span></Cell>
          <Cell className="w-[14px] ml-[2px]"><Chev /></Cell>
        </div>
        <GroupLabel label="Absatz" />
      </div>
      {/* Formatvorlagen */}
      <div className="w-[476px] h-full flex flex-col border-r border-[#d0cecd] pt-[8px]">
        <div className="ml-[10px] h-[71px] w-[452px] flex border border-[#dcdad9] bg-white">
          <div className="flex-1 flex">
            {galleryStyles.map((s, i) => (
              <div key={i} className="w-[87px] flex flex-col items-center overflow-hidden">
                <div className={`h-[46px] w-[72px] pt-[4px] overflow-hidden whitespace-nowrap flex items-center ${i === 4 ? 'justify-center' : 'justify-start'} ${s.c}`}>{s.p}</div>
                <div className="mt-[1px] text-[12.5px] whitespace-nowrap">{s.l}</div>
              </div>
            ))}
          </div>
          <div className="w-[16px] h-full flex flex-col border-l border-[#dcdad9] bg-[#f3f1f0] ml-auto">
            <div className="h-[24px] flex items-center justify-center"><ChevronUp size={10} className="text-[#bbb]" /></div>
            <div className="h-[24px] flex items-center justify-center border-y border-[#aaa] bg-white"><ChevronDown size={10} strokeWidth={2} className="text-[#333]" /></div>
            <div className="h-[21px] flex flex-col items-center justify-center bg-white"><span className="w-[8px] h-px bg-[#333]" /><ChevronDown size={10} strokeWidth={2} className="text-[#333]" /></div>
          </div>
        </div>
        <GroupLabel label="Formatvorlagen" />
      </div>
      {/* Bearbeiten */}
      <div className="w-[130px] h-full flex flex-col border-r border-[#d0cecd] pt-[3px] pl-[15px]">
        <div className="h-[27px] mt-[1px] flex items-center gap-[4px]"><Search size={19} strokeWidth={1.2} className="-scale-x-100 text-[#444]" />Suchen<Chev className="ml-[10px]" /></div>
        <div className="h-[27px] mt-[2px] flex items-center gap-[6px]"><Replace size={16} strokeWidth={1.3} className="text-[#2a78c8]" />Ersetzen</div>
        <div className="h-[27px] flex items-center gap-[6px]"><MousePointer2 size={16} strokeWidth={1} className="text-[#444]" />Markieren<Chev className="-ml-[2px]" /></div>
        <div className="mt-auto h-[19px] -ml-[15px] flex items-center justify-center">Bearbeiten</div>
      </div>
      {/* Sprache */}
      <div className="w-[83px] h-full flex flex-col items-center border-r border-[#d0cecd] pt-[8px]">
        <svg viewBox="0 0 24 42" className="w-[24px] h-[42px]"><rect x="5" y="0" width="14" height="28" rx="7" fill="#5e93d0" /><path d="M1 18v6a11 9 0 0022 0v-6M12 33v6M6 40h12" fill="none" stroke="#555" strokeWidth="1.4" /></svg>
        <span className="mt-[2px] leading-4">Diktieren</span>
        <Chev className="mt-[3px]" />
        <div className="mt-auto h-[19px] flex items-center">Sprache</div>
      </div>
      {/* Editor */}
      <div className="w-[69px] h-full flex flex-col items-center border-r border-[#d0cecd] pt-[6px]">
        <svg viewBox="0 0 30 42" className="w-[33px] h-[44px]"><path d="M22 1L3 37l-1 4 4-2L26 6z" fill="#f8f8f8" stroke="#1e5eb0" strokeWidth="1.4" /><path d="M14 14h16l-3 4H12zM11 21h15l-3 4H9zM8 28h12l-3 4H6z" fill="#1e5eb0" /></svg>
        <span className="mt-[2px] leading-4">Editor</span>
        <div className="mt-auto h-[19px] flex items-center">Editor</div>
      </div>
      <div className="flex-1 flex items-end justify-end pb-[1px] pr-[9px]"><ChevronUp size={16} strokeWidth={1.5} /></div>
    </div>
  )
}

const squiggle = 'underline decoration-wavy decoration-[#e53935] decoration-1 underline-offset-[3px]'
const dbl = 'underline decoration-double decoration-[#3f6fc2] decoration-1 underline-offset-[3px]'
const mark = 'bg-[#ffff00] inline-block h-[23px]'

function DocLine({ className = '', children }: { className?: string; children?: ReactNode }) {
  return <div className={`h-[23px] leading-[23px] whitespace-nowrap flex ${className}`}>{children}</div>
}

function Inline({ children }: { children: ReactNode }) {
  return <span className="whitespace-pre">{children}</span>
}

function DocPage() {
  return (
    <div className="w-[950px] ml-[334px] mt-[20px] h-full bg-white border border-[#dcdcdc] pt-[111px] font-['Lato',sans-serif] text-[16.5px] text-[#333]">
      <DocLine className="pl-[111px]">Dass-Sätze:</DocLine>
      <DocLine className="pl-[141px] mt-[50px]"><span className="w-[28px]">1.</span><Inline>Ich glaube<span className={mark}>,</span> <span className={dbl}><span className={mark}>dass</span>.....</span>: Komma vor dass</Inline></DocLine>
      <DocLine className="pl-[141px]"><span className="w-[28px]">2.</span><Inline>Nebensatz (<span className={squiggle}>subordinate</span> <span className={squiggle}>clause</span>): konjugiertes Verb immer am Ende<span className="tracking-[1.5px]">!!!!!!!!!!!!!</span></Inline></DocLine>
      <DocLine className="pl-[169px]"><span className="w-[29px]">a)</span><Inline><span className={squiggle}>Modalverb+Infinitiv</span>: Ich kann heute Abend ins Kino gehen.</Inline></DocLine>
      <DocLine className="pl-[198px]"><Inline>Ich glaube, dass Ich heute Abend ins Kino <span className={mark}>gehen kann</span><span className={dbl}>. :</span> Infinitiv + konjugiertes</Inline></DocLine>
      <DocLine className="pl-[198px]">Modalverb</DocLine>
      <DocLine className="pl-[169px] mt-[25px]"><span className="w-[29px]">b)</span><Inline>Perfekt: Gestern bin ich ins <span className={squiggle}>Milaneo</span> gegangen.</Inline></DocLine>
      <DocLine className="pl-[198px]"><Inline>Ich denke, dass ich gestern ins <span className={squiggle}>Milaneo</span> <span className={mark}>gegangen bin</span><span className={dbl}>. :</span> Partizip <span className={squiggle}>Perfekt+konjugiertes</span></Inline></DocLine>
      <DocLine className="pl-[198px]"><Inline>Hilfsverb (<span className={squiggle}>auxiliary</span> <span className={squiggle}>verb</span>).</Inline></DocLine>
      <DocLine className="pl-[169px] mt-[48px]"><span className="w-[29px]">c)</span><Inline>Trennbare Verben: Morgen rufe ich dich um 15 Uhr an.</Inline></DocLine>
      <DocLine className="pl-[198px]"><Inline>Ich glaube, das ich dich morgen um 15 Uhr <span className={mark}>anrufe</span><span className={dbl}>. :</span> trennbares Verb immer</Inline></DocLine>
      <DocLine className="pl-[198px] mt-[1px]"><Inline>zusammen<span className="tracking-[1.2px]">!!!!</span></Inline></DocLine>
    </div>
  )
}

function Word() {
  return (
    <div className="w-[1639px] ml-[107px] flex flex-col h-full">
      <div className="h-[40px] shrink-0 bg-[#2b579a] flex items-center text-white/90 text-[13.5px]">
        <span className="ml-[247px]">Dokument1&nbsp; - &nbsp;Word</span>
        <div className="ml-[235px] w-[442px] h-[26px] bg-[#aebfda] flex items-center pl-[20px] gap-[10px] text-[#7f95b8]"><Search size={16} className="-scale-x-100" />Suchen</div>
        <span className="ml-auto text-[13.5px] tracking-[0.05px]">Simone Durina-Sasdi</span>
        <span className="ml-[14px] w-[28px] h-[28px] rounded-full bg-[#6b3e2a] text-[11px] flex items-center justify-center">SD</span>
        <PanelTop size={15} strokeWidth={1.2} className="ml-[31px]" />
        <Minus size={14} strokeWidth={1.2} className="ml-[42px]" />
        <Copy size={13} strokeWidth={1.2} className="ml-[40px]" />
        <X size={17} strokeWidth={1.2} className="ml-[40px] mr-[19px]" />
      </div>
      <div className="h-[36px] shrink-0 bg-[#f3f1f0] flex items-center text-[14.5px] text-[#444] whitespace-nowrap">
        <span className="ml-[16px]">Datei</span>
        <span className="ml-[33px] relative font-semibold">Start<span className="absolute left-0 right-0 top-[23px] h-[3px] bg-[#2b579a]" /></span>
        <span className="ml-[34px]">Einfügen</span>
        <span className="ml-[39px]">Entwurf</span>
        <span className="ml-[34px]">Layout</span>
        <span className="ml-[36px]">Referenzen</span>
        <span className="ml-[36px]">Sendungen</span>
        <span className="ml-[37px]">Überprüfen</span>
        <span className="ml-[35px]">Ansicht</span>
        <span className="ml-[35px]">Hilfe</span>
        <span className="ml-[38px]">Easy Document Creator</span>
        <div className="ml-auto mr-[15px] flex gap-[12px] font-semibold text-[#2b579a]">
          <div className="w-[79px] h-[32px] bg-[#fbfafa] flex items-center justify-center gap-[5px]"><Share size={14} />Teilen</div>
          <div className="w-[134px] h-[32px] bg-[#fbfafa] flex items-center justify-center gap-[5px]"><MessageSquare size={14} />Kommentare</div>
        </div>
      </div>
      <Ribbon />
      <div className="h-[44px] shrink-0 bg-[#f3f1f0] border-y-2 border-[#dedcdb] flex items-center text-[13.5px] text-[#444] pl-[12px] whitespace-nowrap">
        <span>Automatisches Speichern</span>
        <span className="ml-[9px] w-[46px] h-[18px] rounded-full border-2 border-[#444] flex items-center pl-[3px]"><span className="w-[9px] h-[9px] rounded-full bg-[#333]" /></span>
        <Save size={21} strokeWidth={1.6} fill="#e9c8ef" className="ml-[17px] text-[#a23bb0]" />
        <Undo2 size={21} strokeWidth={1.3} className="ml-[15px] text-[#444]" />
        <Chev className="ml-[2px]" />
        <Redo size={21} strokeWidth={1.3} className="ml-[13px] text-[#444]" />
        <span className="ml-[18px] flex flex-col items-center"><span className="w-[8px] h-px bg-[#666]" /><Chev /></span>
      </div>
      <div className="flex-1 min-h-0 bg-[#e6e6e6] flex overflow-hidden">
        <DocPage />
        <div className="w-[18px] ml-[336px] mb-[3px] flex flex-col">
          <div className="h-[18px] bg-white flex items-center justify-center"><span className="w-0 h-0 border-x-[4px] border-x-transparent border-b-[6px] border-b-[#555]" /></div>
          <div className="h-[251px] bg-white mx-px mt-px border border-[#e0e0e0]" />
          <div className="flex-1" />
          <div className="h-[18px] bg-white flex items-center justify-center"><span className="w-0 h-0 border-x-[4px] border-x-transparent border-t-[6px] border-t-[#555]" /></div>
        </div>
      </div>
      <div className="h-[26px] shrink-0 bg-[#f3f3f3] border-t border-[#dcdcdc] flex items-center text-[13px] text-[#666] whitespace-nowrap">
        <span className="ml-[8px]">Seite 1 von 1</span>
        <span className="ml-[24px]">90 Wörter</span>
        <svg viewBox="0 0 18 18" className="ml-[21px] w-[18px] h-[18px]" fill="none" stroke="#444"><path d="M3 1.500h11v15H3zM8 5h4M6 8h6" /><path d="M10 11l6 6M16 11l-6 6" /></svg>
        <span className="ml-[23px]">Deutsch (Deutschland)</span>
        <Focus size={17} strokeWidth={1} className="ml-[835px] text-[#444]" />
        <span className="ml-[5px]">Fokus</span>
        <BookOpen size={16} strokeWidth={1} className="ml-[30px] text-[#444]" />
        <span className="ml-[17px] w-[45px] h-full bg-[#c6c6c6] flex items-center justify-center">
          <svg viewBox="0 0 14 18" className="w-[14px] h-[18px]" fill="none" stroke="#222"><path d="M1 .500h12v17H1zM3 4h8M3 7h8M3 10h8M3 13h8" /></svg>
        </span>
        <svg viewBox="0 0 16 18" className="ml-[18px] w-[16px] h-[18px]" fill="none" stroke="#444"><path d="M1 .500h12v17H1zM3 4h8M3 7h8" /><circle cx="10" cy="13" r="4" fill="#f3f3f3" /><path d="M6 13h8M10 9v8" /></svg>
        <Minus size={11} className="ml-[23px]" />
        <div className="ml-[6px] w-[120px] h-px bg-[#999] flex items-center justify-center"><span className="w-[4px] h-[14px] bg-[#666]" /></div>
        <Plus size={11} className="ml-[5px]" />
        <span className="ml-[13px]">100 %</span>
      </div>
      <div className="h-[48px] shrink-0 bg-[#2b292b]" />
    </div>
  )
}

export default function App() {
  return (
    <div className="relative w-[1920px] h-[1080px] overflow-hidden flex flex-col font-['Open_Sans',sans-serif] bg-white">
      <TopBar />
      <div className="flex-1 min-h-0 flex">
        <Dock />
        <div className="flex-1 min-w-0 flex flex-col">
          <ChromeFrame />
          <div className="flex-1 min-h-0 pt-[5px] relative">
            <Word />
            <div className="absolute left-[23px] top-[23px] w-[50px] h-[50px] rounded-full border-2 border-[#ececec] flex items-center justify-center"><Info size={18} className="text-[#111]" /></div>
          </div>
        </div>
      </div>

      {/* webex overlays */}
      <div className="absolute left-[769px] top-[170px] w-[422px] h-[52px] rounded-[26px] bg-white/85 flex items-center pl-[16px] pt-[2px] text-[21px] text-[#111] font-['Liberation_Sans',sans-serif] whitespace-nowrap">Anzeigen der Anwendung von Simone ...</div>
      <div className="absolute left-[1485px] top-[216px] h-[42px] flex gap-[3px] font-['Liberation_Sans',sans-serif]">
        <div className="w-[46px] h-full bg-[#a8a8a8]/70 flex items-center justify-center"><ArrowLeftToLine size={18} strokeWidth={1.3} className="text-white" /></div>
        <div className="w-[311px] h-full bg-[#a8a8a8]/70 flex items-center pl-[11px] text-[18px] text-white whitespace-nowrap">Es spricht: Simone Durina-Sasdi</div>
      </div>
      <div className="absolute left-[959px] top-[982px] w-[77px] h-[77px] rounded-full border-2 border-[#e8472f] bg-[#ff5040]/15 flex items-center justify-center">
        <svg viewBox="0 0 24 36" className="w-[24px] h-[36px]" fill="none" stroke="#e8472f" strokeWidth="1.5"><rect x="7" y="2" width="10" height="24" rx="5" /><path d="M4 28L20 3M12 28v5M8 33h8" /></svg>
      </div>
      <svg viewBox="0 0 12 24" className="absolute left-[866px] top-[558px] w-[12px] h-[24px]" fill="none" stroke="#333" strokeWidth="1.3"><path d="M2 1h8M6 1v22M2 23h8" /></svg>
    </div>
  )
}
